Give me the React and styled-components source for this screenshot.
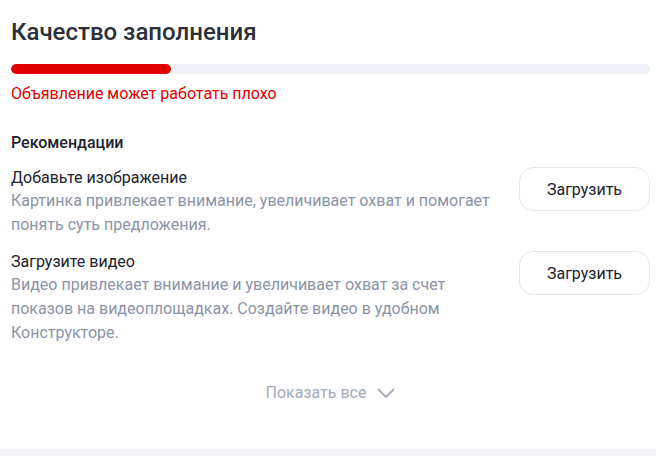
import React from 'react';
import styled, { createGlobalStyle } from 'styled-components';

const GlobalStyle = createGlobalStyle`
  html, body {
    margin: 0;
    padding: 0;
    background: #ffffff;
  }
  body {
    font-family: Roboto, "Noto Sans", sans-serif;
    color: #21242c;
  }
`;

const Panel = styled.div`
  width: 656px;
  height: 456px;
  display: flex;
  flex-direction: column;
  box-sizing: border-box;
`;

const Content = styled.div`
  flex: 1;
  padding: 18px 6px 0 11px;
  display: flex;
  flex-direction: column;
`;

const Title = styled.h2`
  margin: 0;
  font-size: 24px;
  font-weight: 500;
  line-height: 28px;
  color: #2b2f3a;
`;

const Track = styled.div`
  margin-top: 18px;
  height: 10px;
  border-radius: 5px;
  background: #eef1f6;
  overflow: hidden;
`;

const Fill = styled.div`
  height: 100%;
  border-radius: 5px;
  background: #e00000;
`;

const Warning = styled.div`
  margin-top: 9px;
  font-size: 16px;
  line-height: 22px;
  color: #e00000;
`;

const SectionTitle = styled.div`
  margin-top: 27px;
  font-size: 16px;
  font-weight: 500;
  line-height: 22px;
  color: #21242c;
`;

const List = styled.div`
  margin-top: 13px;
  display: flex;
  flex-direction: column;
  gap: 14px;
`;

const Item = styled.div`
  display: flex;
  align-items: flex-start;
  justify-content: space-between;
`;

const Text = styled.div`
  width: 490px;
`;

const ItemTitle = styled.div`
  font-size: 16px;
  line-height: 22px;
  color: #21242c;
`;

const ItemDesc = styled.div`
  font-size: 16px;
  line-height: 24px;
  color: #8a93a7;
`;

const Button = styled.button`
  width: 131px;
  height: 44px;
  border: 1px solid #e4e7ef;
  border-radius: 14px;
  background: #fff;
  font-family: inherit;
  font-size: 16px;
  color: #21242c;
  cursor: pointer;
`;

const ShowAll = styled.button`
  align-self: center;
  margin: 38px 0 0;
  padding: 0;
  border: none;
  background: none;
  display: flex;
  align-items: center;
  gap: 11px;
  font-family: inherit;
  font-size: 16px;
  color: #a3abbb;
  cursor: pointer;
`;

const Footer = styled.div`
  height: 7px;
  background: #f5f6fa;
`;

const recommendations = [
  {
    title: 'Добавьте изображение',
    desc: 'Картинка привлекает внимание, увеличивает охват и помогает понять суть предложения.',
  },
  {
    title: 'Загрузите видео',
    desc: 'Видео привлекает внимание и увеличивает охват за счет показов на видеоплощадках. Создайте видео в удобном Конструкторе.',
  },
];

export default function App() {
  const quality = 25;
  return (
    <Panel>
      <GlobalStyle />
      <Content>
        <Title>Качество заполнения</Title>
        <Track>
          <Fill style={{ width: `${quality}%` }} />
        </Track>
        <Warning>Объявление может работать плохо</Warning>
        <SectionTitle>Рекомендации</SectionTitle>
        <List>
          {recommendations.map((r) => (
            <Item key={r.title}>
              <Text>
                <ItemTitle>{r.title}</ItemTitle>
                <ItemDesc>{r.desc}</ItemDesc>
              </Text>
              <Button>Загрузить</Button>
            </Item>
          ))}
        </List>
        <ShowAll>
          Показать все
          <svg width="18" height="10" viewBox="0 0 18 10" fill="none">
            <path d="M1 1l8 8 8-8" stroke="#a3abbb" strokeWidth="1.8" />
          </svg>
        </ShowAll>
      </Content>
      <Footer />
    </Panel>
  );
}
